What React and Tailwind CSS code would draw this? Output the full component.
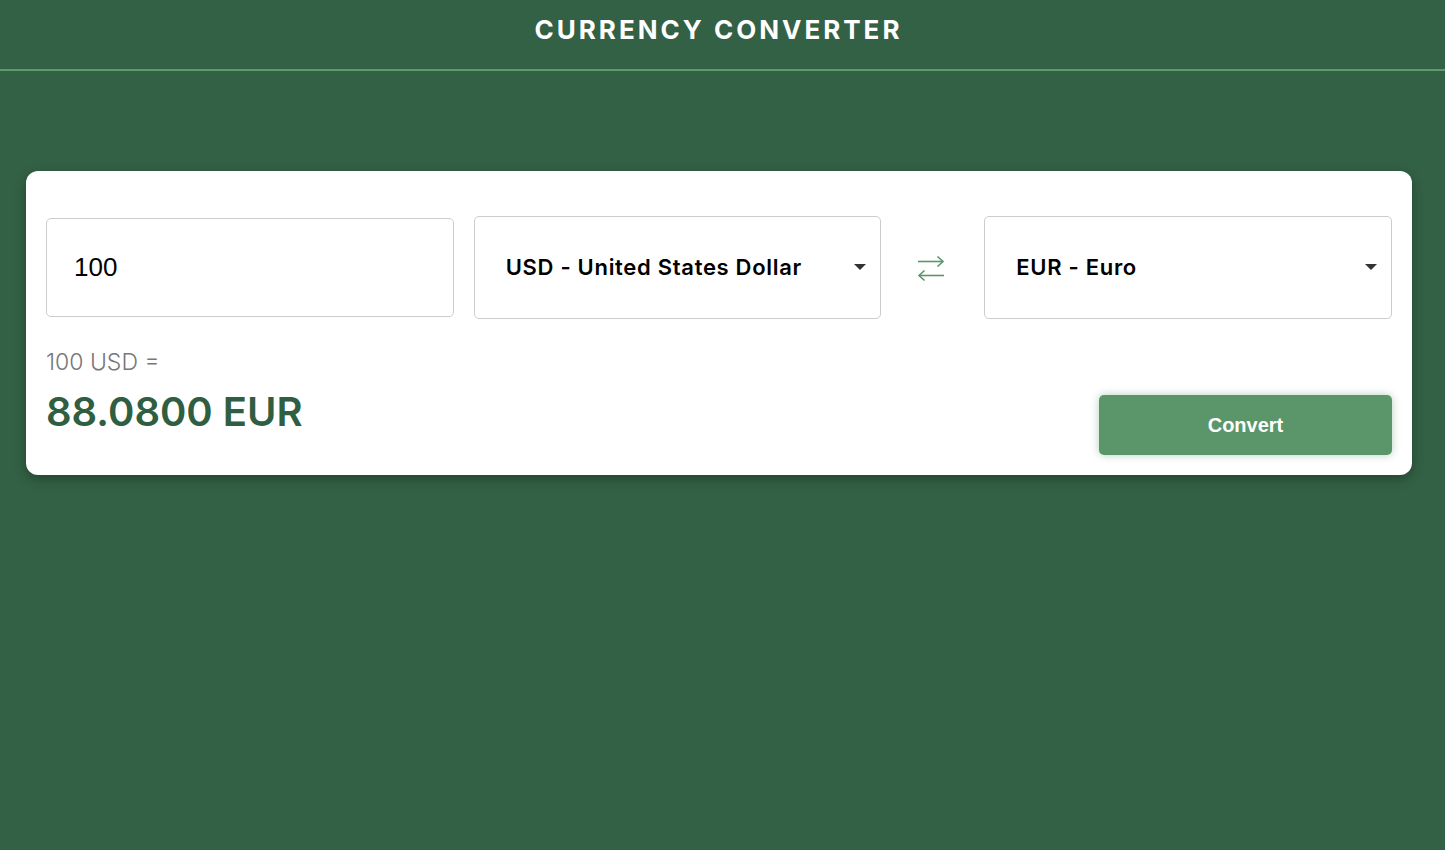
import React from "react";

const inter = { fontFamily: 'Inter, "Noto Sans", sans-serif' };

function Caret() {
  return (
    <svg width="12" height="7" viewBox="0 0 12 7" className="shrink-0 mr-[14px]">
      <path d="M0 0 L12 0 L6 6 Z" fill="#333" />
    </svg>
  );
}

function SwapIcon() {
  return (
    <svg width="30" height="28" viewBox="0 0 30 28" fill="none" stroke="#5a9669" strokeWidth="1.6">
      <path d="M2 7.5 H27" />
      <path d="M21.5 2.5 L27 7.5 L21.5 12.5" />
      <path d="M28 21.5 H3" />
      <path d="M8.5 16.5 L3 21.5 L8.5 26.5" />
    </svg>
  );
}

export default function App() {
  return (
    <div className="min-h-[850px] w-full bg-[#336145]" style={inter}>
      <header className="h-[71px] border-b-2 border-[#5c9b6b] flex items-center justify-center pr-[8px]">
        <h1 className="text-white font-bold text-[26px] tracking-[3px] -mt-[10px]">
          CURRENCY CONVERTER
        </h1>
      </header>
      <main className="pl-[26px] pr-[33px] pt-[100px]">
        <div className="bg-white rounded-[12px] shadow-[0_4px_12px_rgba(0,0,0,0.3)] px-[20px] pt-[45px] pb-[20px]">
          <div className="flex items-center">
            <div className="flex-1 basis-0 min-w-0 h-[99px] border border-[#cccccc] rounded-[5px] flex items-center">
              <span className="ml-[27px] text-[26px] text-black" style={{ fontFamily: '"Liberation Sans", Arial, sans-serif' }}>100</span>
            </div>
            <div className="w-[20px] shrink-0" />
            <div className="flex-1 basis-0 min-w-0 h-[103px] border border-[#cccccc] rounded-[5px] flex items-center justify-between">
              <span className="ml-[31px] text-[22px] font-semibold text-black tracking-[0.7px] whitespace-nowrap">USD - United States Dollar</span>
              <Caret />
            </div>
            <div className="w-[103px] shrink-0 flex items-center justify-center pr-[4px]">
              <SwapIcon />
            </div>
            <div className="flex-1 basis-0 min-w-0 h-[103px] border border-[#cccccc] rounded-[5px] flex items-center justify-between">
              <span className="ml-[31px] text-[22px] font-semibold text-black tracking-[0.7px] whitespace-nowrap">EUR - Euro</span>
              <Caret />
            </div>
          </div>
          <div className="flex items-start justify-between mt-[28px]">
            <div>
              <div className="text-[23px] font-light text-[#777777] leading-[30px]">100 USD =</div>
              <div className="text-[40px] font-semibold text-[#2f5e41] leading-[50px] mt-[10px]">88.0800 EUR</div>
            </div>
            <button className="w-[293px] h-[60px] mt-[48px] rounded-[5px] bg-[#5a9669] text-white font-bold text-[20px] shadow-[0_0_8px_rgba(90,150,105,0.45)]" style={{ fontFamily: '"Liberation Sans", Arial, sans-serif' }}>
              Convert
            </button>
          </div>
        </div>
      </main>
    </div>
  );
}
